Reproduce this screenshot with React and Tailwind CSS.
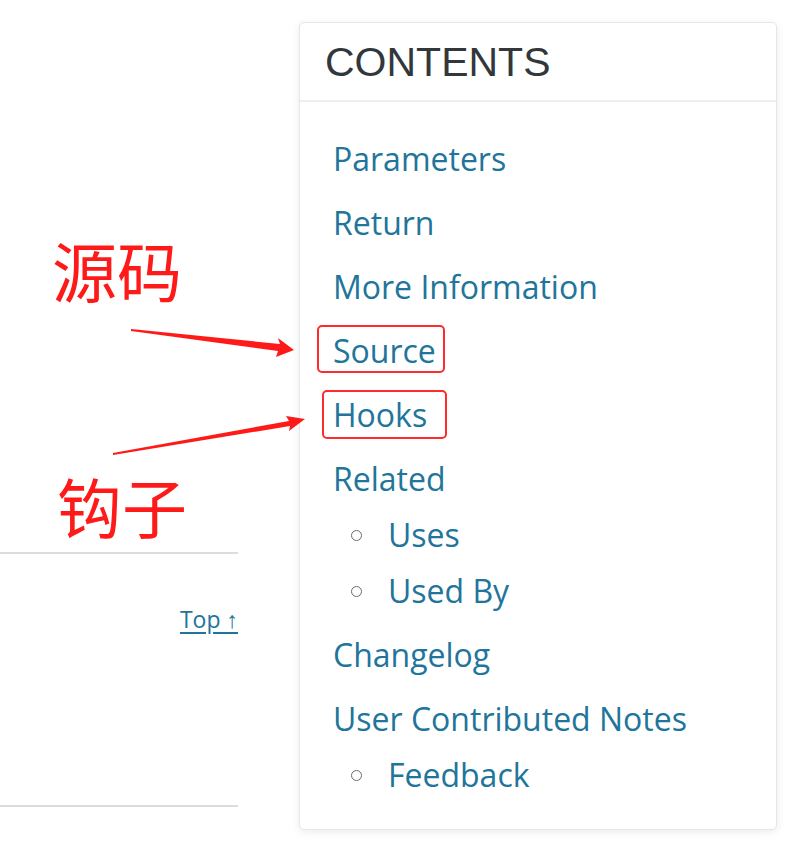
import React from "react";

const sections = [
  { label: "Parameters" },
  { label: "Return" },
  { label: "More Information" },
  { label: "Source" },
  { label: "Hooks" },
  { label: "Related", children: ["Uses", "Used By"] },
  { label: "Changelog" },
  { label: "User Contributed Notes", children: ["Feedback"] },
];

const linkFont = { fontFamily: '"Open Sans", "Noto Sans", sans-serif' };

const Annotations = () => (
  <div className="pointer-events-none absolute inset-0">
    <span
      className="absolute left-[52px] top-[237px] text-[65px] leading-none text-[#ff1a1a]"
      style={{ fontFamily: '"Noto Sans CJK SC", sans-serif' }}
    >
      源码
    </span>
    <span
      className="absolute left-[57px] top-[473px] text-[65px] leading-none text-[#ff1a1a]"
      style={{ fontFamily: '"Noto Sans CJK SC", sans-serif' }}
    >
      钩子
    </span>
    <svg className="absolute left-0 top-0" width="793" height="861">
      <polygon points="131,329 280,344 278,338 294,350 276,357 278,351 131,331" fill="#ff1a1a" />
      <polygon points="113,453 289,421 286,416 305,419 289,431 290,426 113,455" fill="#ff1a1a" />
    </svg>
    <div className="absolute left-[317px] top-[325px] h-[48px] w-[128px] rounded-[5px] border-2 border-[#ff2a2a]" />
    <div className="absolute left-[322px] top-[390px] h-[49px] w-[125px] rounded-[5px] border-2 border-[#ff2a2a]" />
  </div>
);

export default function App() {
  return (
    <div className="relative h-[861px] w-[793px] overflow-hidden bg-white">
      <div className="flex items-start gap-[61px] pt-[22px]">
        {/* left column */}
        <div className="w-[238px] shrink-0 pt-[530px]">
          <div className="h-[2px] bg-[#dcdcdc]" />
          <div className="flex justify-end pt-[54px]">
            <a
              href="#top"
              className="text-[23px] leading-none text-[#21759b] underline underline-offset-4"
              style={linkFont}
            >
              Top ↑
            </a>
          </div>
          <div className="mt-[174px] h-[2px] bg-[#dcdcdc]" />
        </div>

        {/* contents panel */}
        <div className="w-[478px] rounded-[5px] border border-[#e6e6e6] bg-white shadow-[0_2px_8px_rgba(0,0,0,0.08)]">
          <div className="border-b-2 border-[#eeeeee] px-[25px] pb-[14px] pt-[15px]">
            <h2
              className="text-[41px] leading-[48px] text-[#32373c]"
              style={{ fontFamily: '"Liberation Sans", Arial, sans-serif' }}
            >
              CONTENTS
            </h2>
          </div>
          <ul className="px-[33px] pb-[18px] pt-[29px]" style={linkFont}>
            {sections.map((s) => (
              <li key={s.label} className="mb-[8px]">
                <a href="#" className="text-[32px] leading-[56px] text-[#21759b]">
                  {s.label}
                </a>
                {s.children && (
                  <ul>
                    {s.children.map((c) => (
                      <li key={c} className="flex items-center">
                        <span className="ml-[18px] mr-[26px] h-[11px] w-[11px] rounded-full border border-[#6b6b6b]" />
                        <a href="#" className="text-[32px] leading-[56px] text-[#21759b]">
                          {c}
                        </a>
                      </li>
                    ))}
                  </ul>
                )}
              </li>
            ))}
          </ul>
        </div>
      </div>
      <Annotations />
    </div>
  );
}
